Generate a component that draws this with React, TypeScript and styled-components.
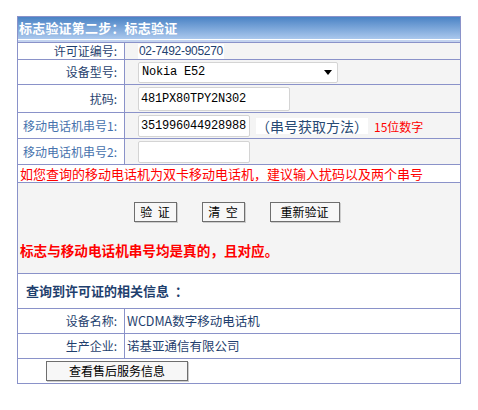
import React from "react";
import styled, { createGlobalStyle } from "styled-components";

const GlobalStyle = createGlobalStyle`
  html, body {
    margin: 0;
    padding: 0;
    background: #ffffff;
  }
  body {
    font-family: "Noto Sans CJK SC", "Liberation Sans", sans-serif;
    font-size: 12px;
    color: #1f3f6e;
  }
`;

const LINE = "#8a92c9";
const NAVY = "#1f3f6e";
const STEEL = "#4672ad";
const SHADE = "#f4f4f4";
const RED = "#ff0000";

const Page = styled.div`
  padding: 16px 0 0 17px;
`;

const Panel = styled.div`
  box-sizing: border-box;
  width: 444px;
  border: 1px solid ${LINE};
`;

const Header = styled.div`
  height: 25px;
  padding-left: 1px;
  background: linear-gradient(
    to bottom,
    #4a83c5 0px,
    #abc8ed 22px,
    #ffffff 22px,
    #ffffff 23px,
    #c3d3ef 23px,
    #c3d3ef 25px
  );
  color: #ffffff;
  font-weight: bold;
  font-size: 13px;
  line-height: 22px;
  letter-spacing: 0.2px;
`;

const Row = styled.div<{ $h: number }>`
  display: grid;
  grid-template-columns: 107px 1fr;
  grid-template-rows: ${(p) => p.$h}px;
  height: ${(p) => p.$h}px;
  border-top: 1px solid ${LINE};
  line-height: 14px;
`;

const FullRow = styled.div<{ $h: number; $bg?: string }>`
  height: ${(p) => p.$h}px;
  border-top: 1px solid ${LINE};
  background: ${(p) => p.$bg ?? "#ffffff"};
  display: flex;
  align-items: center;
  line-height: 16px;
`;

const Label = styled.div<{ $tone?: string }>`
  display: flex;
  align-items: center;
  justify-content: flex-end;
  padding-right: 7px;
  border-right: 1px solid ${LINE};
  background: #ffffff;
  color: ${(p) => p.$tone ?? NAVY};
  font-size: 12px;
  white-space: nowrap;
`;

const Value = styled.div<{ $bg?: string; $pad?: number }>`
  display: flex;
  align-items: center;
  gap: 6px;
  padding-left: ${(p) => p.$pad ?? 13}px;
  background: ${(p) => p.$bg ?? SHADE};
  color: ${NAVY};
  white-space: nowrap;
`;

const Plain = styled.span`
  background: #ffffff;
  padding: 0 1px;
  font-family: "Liberation Sans", sans-serif;
  font-size: 12px;
  letter-spacing: -0.3px;
  line-height: 15px;
  color: ${NAVY};
`;

const SelectBox = styled.div`
  box-sizing: border-box;
  width: 200px;
  height: 21px;
  display: flex;
  align-items: center;
  justify-content: space-between;
  padding: 0 5px 0 3px;
  background: #ffffff;
  border: 1px solid #d4d4d4;
  border-radius: 2px;
  font-family: "Liberation Mono", monospace;
  font-size: 12px;
  letter-spacing: -0.2px;
  color: #000000;
`;

const Field = styled.input<{ $w: number; $h: number }>`
  box-sizing: border-box;
  width: ${(p) => p.$w}px;
  height: ${(p) => p.$h}px;
  margin: 0;
  padding: 0 0 0 2px;
  background: #ffffff;
  border: 1px solid #d4d4d4;
  border-radius: 2px;
  outline: none;
  font-family: "Liberation Mono", monospace;
  font-size: 12px;
  letter-spacing: -0.2px;
  color: #000000;
`;

const HowTo = styled.span`
  background: #ffffff;
  font-size: 14px;
  line-height: 16px;
  color: #284a74;
`;

const Hint = styled.span`
  color: ${RED};
  font-size: 12px;
  padding-top: 2px;
`;

const Notice = styled.span`
  color: ${RED};
  font-size: 13px;
  padding-left: 2px;
`;

const ActionArea = styled.div`
  height: 90px;
  border-top: 1px solid ${LINE};
  background: ${SHADE};
  display: flex;
  flex-direction: column;
`;

const ButtonBar = styled.div`
  display: flex;
  justify-content: center;
  gap: 25px;
  margin-top: 19px;
  padding-right: 5px;
`;

const Button = styled.button<{ $w: number }>`
  box-sizing: border-box;
  width: ${(p) => p.$w}px;
  height: 20px;
  margin: 0;
  padding: 0;
  background: #f7f7f7;
  border: 1px solid #6e6e6e;
  box-shadow: 1px 1px 0 #cdcdcd;
  font-family: "Noto Sans CJK SC", sans-serif;
  font-size: 12px;
  line-height: 18px;
  color: #000000;
  white-space: pre;
`;

const Verdict = styled.div`
  margin-top: 19px;
  padding-left: 2px;
  color: ${RED};
  font-weight: bold;
  font-size: 13.6px;
  line-height: 18px;
`;

const Heading = styled.span`
  padding-left: 8px;
  font-weight: bold;
  font-size: 13px;
  color: ${NAVY};
  white-space: pre;
`;

const InfoText = styled.span`
  font-size: 12.5px;
  color: ${NAVY};
`;

const ServiceButton = styled(Button)`
  margin-left: 28px;
`;

const Caret = () => (
  <svg width="8" height="5" viewBox="0 0 8 5">
    <path d="M0 0 H8 L4 5 Z" fill="#000" />
  </svg>
);

export default function App() {
  return (
    <>
      <GlobalStyle />
      <Page>
        <Panel>
          <Header>标志验证第二步：标志验证</Header>

          <Row $h={16}>
            <Label>许可证编号:</Label>
            <Value>
              <Plain>02-7492-905270</Plain>
            </Value>
          </Row>

          <Row $h={24}>
            <Label>设备型号:</Label>
            <Value>
              <SelectBox>
                <span>Nokia E52</span>
                <Caret />
              </SelectBox>
            </Value>
          </Row>

          <Row $h={27}>
            <Label>扰码:</Label>
            <Value>
              <Field $w={152} $h={24} readOnly value="481PX80TPY2N302" />
            </Value>
          </Row>

          <Row $h={25}>
            <Label $tone={STEEL}>移动电话机串号1:</Label>
            <Value>
              <Field $w={112} $h={22} readOnly value="351996044928988" />
              <HowTo>（串号获取方法）</HowTo>
              <Hint>15位数字</Hint>
            </Value>
          </Row>

          <Row $h={25}>
            <Label $tone={STEEL}>移动电话机串号2:</Label>
            <Value>
              <Field $w={112} $h={22} readOnly value="" />
            </Value>
          </Row>

          <FullRow $h={17}>
            <Notice>如您查询的移动电话机为双卡移动电话机，建议输入扰码以及两个串号</Notice>
          </FullRow>

          <ActionArea>
            <ButtonBar>
              <Button $w={43}>{"验  证"}</Button>
              <Button $w={43}>{"清  空"}</Button>
              <Button $w={70}>重新验证</Button>
            </ButtonBar>
            <Verdict>标志与移动电话机串号均是真的，且对应。</Verdict>
          </ActionArea>

          <FullRow $h={34}>
            <Heading>{"查询到许可证的相关信息  ："}</Heading>
          </FullRow>

          <Row $h={24}>
            <Label>设备名称:</Label>
            <Value $bg="#ffffff" $pad={2}>
              <InfoText>WCDMA数字移动电话机</InfoText>
            </Value>
          </Row>

          <Row $h={24}>
            <Label>生产企业:</Label>
            <Value $bg="#ffffff" $pad={2}>
              <InfoText>诺基亚通信有限公司</InfoText>
            </Value>
          </Row>

          <FullRow $h={24}>
            <ServiceButton $w={142}>查看售后服务信息</ServiceButton>
          </FullRow>
        </Panel>
      </Page>
    </>
  );
}
